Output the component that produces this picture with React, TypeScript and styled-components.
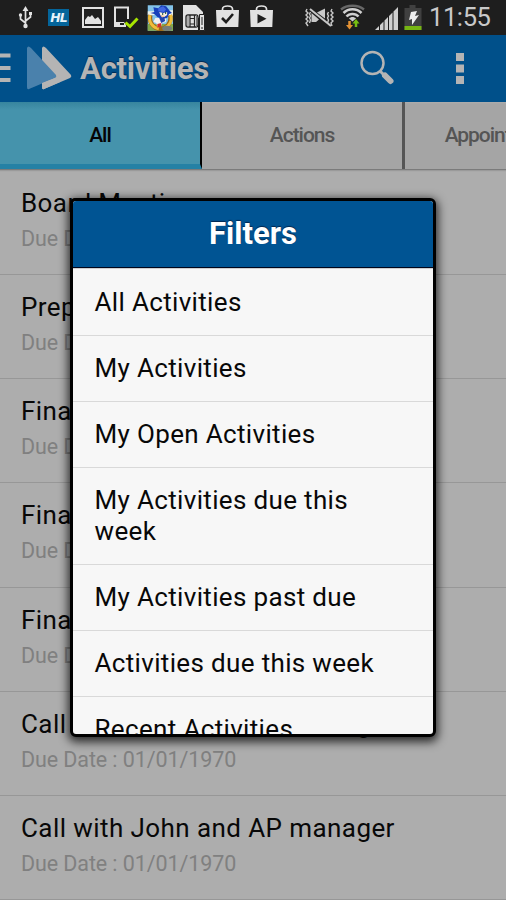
import React from "react";
import styled, { createGlobalStyle } from "styled-components";

const GlobalStyle = createGlobalStyle`
  * { box-sizing: border-box; }
  html, body { margin: 0; overflow: hidden; }
  body { font-family: Roboto, "Liberation Sans", sans-serif; }
`;

const Screen = styled.div`
  position: relative;
  display: flex;
  flex-direction: column;
  width: 506px;
  height: 900px;
  overflow: hidden;
  background: #adadad;
`;

const StatusBar = styled.header`
  display: flex;
  justify-content: space-between;
  height: 35px;
  flex: none;
  background: #1e1e1e;
`;

const Clock = styled.time`
  width: 77px;
  font-size: 25.5px;
  line-height: 35px;
  color: #c9c9c9;
  letter-spacing: -0.4px;
`;

const StatusSide = styled.div`
  display: flex;
`;

const ActionBar = styled.div`
  display: flex;
  align-items: center;
  height: 67px;
  flex: none;
  background: #00508a;
`;

const AppTitle = styled.h1`
  flex: 1;
  margin: 0;
  font-size: 31px;
  line-height: 66px;
  font-weight: 700;
  color: #b4b4b4;
  letter-spacing: -0.2px;
  text-shadow: 0 -1px 1px #002750;
`;

const Tabs = styled.nav`
  display: flex;
  height: 68px;
  flex: none;
  border-bottom: 1px solid #7b7b7b;
  box-shadow: 0 1px 1px #9a9a9a;
`;

const Tab = styled.div<{ $active?: boolean }>`
  width: 202px;
  height: 67px;
  flex: none;
  text-align: center;
  font-size: 21px;
  line-height: 66px;
  font-weight: 500;
  letter-spacing: -1.05px;
  color: ${(p) => (p.$active ? "#050505" : "#555")};
  border-right: ${(p) => (p.$active ? "2px solid #000" : "3px solid #555")};
  border-bottom: ${(p) => (p.$active ? "5px solid #2581a5" : "0")};
  background: ${(p) =>
    p.$active ? "linear-gradient(#37859e, #4593ac 8px)" : "linear-gradient(#adadad, #a5a5a5 2px)"};

  &:nth-child(2) {
    width: 203px;
  }
`;

const ActivityList = styled.ul`
  margin: 1px 0 0;
  padding: 0;
  list-style: none;
`;

const ActivityRow = styled.li`
  height: 104.15px;
  padding: 16px 0 0 21px;
  border-bottom: 1px solid #979797;
`;

const ActivityTitle = styled.div`
  font-size: 26px;
  line-height: 32px;
  letter-spacing: 0.42px;
  color: #080808;
  white-space: nowrap;
`;

const DueDate = styled.div`
  margin-top: 5px;
  font-size: 21.5px;
  line-height: 30px;
  letter-spacing: -0.1px;
  color: #808080;
`;

const Dialog = styled.section`
  position: absolute;
  left: 70px;
  top: 198px;
  width: 366px;
  height: 539px;
  overflow: hidden;
  border: 3px solid #000;
  border-radius: 6px;
  background: #f7f7f7;
  box-shadow: 0 3px 10px 2px rgba(0, 0, 0, 0.75);
`;

const DialogHeader = styled.h2`
  height: 67px;
  margin: 0;
  border-bottom: 1px solid #00061c;
  background: #005493;
  color: #fff;
  text-align: center;
  font-size: 31px;
  line-height: 66px;
  font-weight: 700;
  text-shadow: 0 -1px 1px #002750;
`;

const FilterList = styled.div`
  padding-top: 1px;
  border-top: 1px solid #cfcfcf;
`;

const FilterItem = styled.div`
  padding: 17px 40px 17px 21.5px;
  border-bottom: 1px solid #d9d9d9;
  color: #080808;
  font-size: 26px;
  line-height: 31px;
  letter-spacing: 0.34px;
`;

const activities = [
  "Board Meeting",
  "Prepare Report",
  "Finalize Budget",
  "Finalize Contract",
  "Finalize Plan",
  "Call with John and AP manager",
  "Call with John and AP manager",
];

const filters = [
  "All Activities",
  "My Activities",
  "My Open Activities",
  "My Activities due this week",
  "My Activities past due",
  "Activities due this week",
  "Recent Activities",
];

const NotificationIcons = () => (
  <svg width="280" height="35" fill="none">
    <g stroke="#e2e2e2" strokeWidth="1.7">
      <path d="M25.5 10v15M25.5 23l-5-4v-4M25.5 21l5-4v-3" />
      <circle cx="25.5" cy="26" r="2.2" fill="#e2e2e2" stroke="none" />
      <circle cx="20.5" cy="15" r="1.7" fill="#e2e2e2" stroke="none" />
      <path d="M25.5 6l3 5h-6zM29 12h3v3h-3z" fill="#e2e2e2" stroke="none" />
    </g>
    <path fill="#04659b" d="M48 9h21v17H48z" />
    <text x="50.5" y="22" fill="#e8f3fa" fontSize="12" fontWeight="900" fontStyle="italic" fontFamily="Roboto" textLength="17" lengthAdjust="spacingAndGlyphs">HL</text>
    <path stroke="#e2e2e2" strokeWidth="2" d="M83 8h20v19H83z" />
    <path fill="#e2e2e2" d="M85 24v-4l3-4 2 1 2-2 3 4 3-2 3 4v3z" />
    <path stroke="#e2e2e2" strokeWidth="2" d="M128 19V7.5h-13V26h10" />
    <path fill="#e2e2e2" d="M115 22h9l2 3v2h-11z" />
    <path fill="#1e1e1e" d="M120 23h4v2h-4z" />
    <path stroke="#a8e600" strokeWidth="3" d="m125.5 22.5 4.5 4 7.5-8" />
    <svg x="147.5" y="5" width="25.5" height="26" viewBox="0 0 26 26">
      <path fill="#83c3e9" d="M0 0h26v26H0z" />
      <path fill="#edf2ed" d="M0 6h7v4H0zM20 5h6v6h-6z" />
      <path fill="#83aa4b" d="M0 19h26v7H0z" />
      <path stroke="#9f6817" strokeWidth="4.5" d="M3 10c-2 7 3 14 10 14s12-7 10-14" />
      <path stroke="#f0bd3b" strokeWidth="3" d="M2.5 10c-2 7 3 13 9 14M23.5 10c2 6-1 11-6 13" />
      <path fill="#f4f0ef" d="M8 13h11v4l-4 1-1 3-4 1-1-4-3-1z" />
      <path fill="#173fba" d="m6 2 5 1 3-3 5 1 4 5 2 2-3 1-2 4-5 1-5-2-3-3-4-1 4-1z" />
      <path fill="#4268e2" d="m11 3 5-2 3 3-2 3-6-1z" />
      <path fill="#f8efe0" d="m12 7 4 1 4-1v3l-3 2-4-2z" />
      <path fill="#174e3c" d="M15 8h1v2h-1zM18 7h1v2h-1z" />
      <path fill="#f3c6a1" d="m13 10 5 1-3 2z" />
      <path fill="#2445ad" d="m12 13 5-1 1 4-4 2z" />
      <path fill="#d2312e" d="m10 19 4-1v4l-4 1z" />
      <ellipse cx="20" cy="23.5" rx="5" ry="2.7" fill="#777d79" />
    </svg>
    <path fill="#e2e2e2" d="M183 5h13l7 7v3l-5 3v12h-15z" />
    <rect x="186" y="15" width="12" height="12" rx="2" stroke="#242424" strokeWidth="1.3" />
    <path stroke="#242424" strokeWidth="1.2" d="M190 15v12M194.5 15v12M190 18.5h4.5M190 24h4.5" />
    <path stroke="#777" d="M188 15v12M196.5 15v12" />
    <path fill="#e2e2e2" stroke="#222" d="M199.5 14.5h5v16h-5z" />
    <path fill="#222" d="M201.5 17h1v8h-1zM201.5 27h1v2h-1z" />
    <g>
      <path stroke="#e2e2e2" strokeWidth="1.7" d="M222.5 11V9c0-4 10-4 10 0v2M256.5 11V9c0-4 10-4 10 0v2" />
      <path fill="#e2e2e2" d="M216 10h23l-.7 17h-21.6zM250 10h23l-.7 17h-21.6z" />
      <path stroke="#1e1e1e" strokeWidth="2.6" d="m222 18 4 4 7-8" />
      <path fill="#1e1e1e" d="m257.5 14 9 4.7-9 4.7z" />
    </g>
  </svg>
);

const SystemIcons = () => (
  <svg width="126" height="35" viewBox="303 0 126 35" fill="none">
    <g stroke="#c8c8c8" strokeWidth="1.4">
      <path d="m307 9-1 2 2 2-2 2 2 2-2 2 2 2-2 2 2 3M310.5 12l-1 2 1 2-1 2 1 2-1 3M332 9l-1 2 2 2-2 2 2 2-2 2 2 2-2 2 1 3M328.5 12l-1 2 1 2-1 2 1 2-1 3" />
      <path strokeWidth="2" d="m310 9 21 17" />
    </g>
    <path fill="#c8c8c8" d="M311.5 13v9h4.5l3-2.5zM317 12.5l8-4v10z" />
    <path stroke="#686868" strokeWidth="2.3" d="M341 9.5c6-5 17-5 23 0" />
    <path stroke="#d0d0d0" strokeWidth="2.5" d="M343.5 13c5-5 13-5 18 0M346.5 16.5c3-3.5 9-3.5 12 0" />
    <path fill="#d0d0d0" d="M349 18.5c2-2 5-2 7 0l-3.5 3z" />
    <path stroke="#e39234" strokeWidth="2.5" d="M349.5 21v5" />
    <path fill="#e39234" d="M346 25h7l-3.5 4.5z" />
    <path stroke="#77bd12" strokeWidth="2.5" d="M356 27v-6" />
    <path fill="#77bd12" d="M352.5 23.5h7L356 19z" />
    <path fill="#d0d0d0" d="m375 30 4-4v4zM380 25l3.5-3.5V30H380zM384.5 20.5l3.5-3.5v13h-3.5zM389 16l3.5-3.5V30H389zM393.5 11.5 398 7v23h-4.5z" />
    <path fill="#404040" d="M409.5 5h6v3h6v22h-17V8h5z" />
    <path fill="#77b513" d="M404.5 26h17v4h-17z" />
    <path fill="#eee" d="m411 12 6-1-2 5 4-1-7 10v-6l-3 1z" />
  </svg>
);

const NavigationMark = () => (
  <svg width="80" height="67">
    <path fill="#b4b4b4" d="M0 18.5h10.5v4H0zM0 31h10.5v4H0zM0 43h10.5v4H0z" />
    <path fill="#b4b4b4" d="M42 13q1-3 4 0l25 27q1 2-1 3L44 54q-2 1-2-2z" />
    <path fill="#4a81ac" d="M27 13q1-3 4 0l25 27q1 2-1 3L29 54q-2 1-2-2z" />
    <path fill="#b4b4b4" d="m42 18 5 6-5-5zM42 48l13-5 5 4-16 7q-2 1-2-2z" />
  </svg>
);

const HeaderTools = () => (
  <svg width="156" height="67" viewBox="350 35 156 67" fill="none">
    <circle cx="372.5" cy="63" r="11" stroke="#b4b4b4" strokeWidth="2.5" />
    <path stroke="#b4b4b4" strokeWidth="3" d="m380 71 4 4" />
    <path stroke="#b4b4b4" strokeWidth="6" strokeLinecap="round" d="m385 75.5 5.5 5.5" />
    <path fill="#b4b4b4" d="M456 53h8v8h-8zM456 64.5h8v8h-8zM456 76h8v8h-8z" />
  </svg>
);

export default function App() {
  return (
    <>
      <GlobalStyle />
      <Screen>
        <StatusBar>
          <NotificationIcons />
          <StatusSide>
            <SystemIcons />
            <Clock>11:55</Clock>
          </StatusSide>
        </StatusBar>
        <ActionBar>
          <NavigationMark />
          <AppTitle>Activities</AppTitle>
          <HeaderTools />
        </ActionBar>
        <Tabs>
          <Tab $active>All</Tab>
          <Tab>Actions</Tab>
          <Tab>Appointments</Tab>
        </Tabs>
        <ActivityList>
          {activities.map((title, index) => (
            <ActivityRow key={index}>
              <ActivityTitle>{title}</ActivityTitle>
              <DueDate>Due Date : 01/01/1970</DueDate>
            </ActivityRow>
          ))}
        </ActivityList>
        <Dialog role="dialog" aria-label="Filters">
          <DialogHeader>Filters</DialogHeader>
          <FilterList>
            {filters.map((filter) => (
              <FilterItem key={filter}>{filter}</FilterItem>
            ))}
          </FilterList>
        </Dialog>
      </Screen>
    </>
  );
}
